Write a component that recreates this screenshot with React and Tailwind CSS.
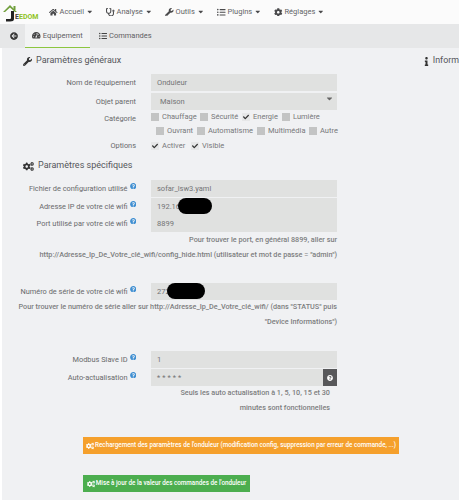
import React from 'react';
import {
  FaHome, FaStethoscope, FaWrench, FaListUl, FaCog, FaCogs, FaCaretDown,
  FaTachometerAlt, FaArrowCircleLeft, FaInfo, FaQuestionCircle, FaCheck,
} from 'react-icons/fa';

const NavItem = ({ icon: Icon, label, className }) => (
  <div className={`flex items-center text-[7.5px] text-[#636466] ${className}`}>
    <Icon className="text-[8.5px] text-[#4a4a4c] mr-[2px]" />
    <span>{label}</span>
    <FaCaretDown className="text-[7.5px] text-[#4a4a4c] ml-[2px]" />
  </div>
);

const Help = () => (
  <FaQuestionCircle className="text-[6.5px] text-[#3f8fd2] ml-[2px] mb-[5px] shrink-0" />
);

const Field = ({ label, help, value, className = '', children }) => (
  <div className={`flex items-center ${className}`}>
    <div className="w-[136px] flex justify-end items-center text-[7.4px] text-[#68696b] whitespace-nowrap">
      {label}
      {help && <Help />}
    </div>
    <div className="relative ml-[15px] w-[186px] h-[17px] bg-[#e0e1e0] flex items-center pl-[6px] text-[7.5px] text-[#737476]">
      {value}
      {children}
    </div>
  </div>
);

const Check = ({ label, checked, className = '' }) => (
  <div className={`flex items-center text-[7.5px] text-[#77787a] ${className}`}>
    <span className={`w-[8px] h-[8px] mr-[3px] flex items-center justify-center ${checked ? 'bg-[#e6e7e8]' : 'bg-[#c3c4c4]'}`}>
      {checked && <FaCheck className="text-[6px] text-[#333]" />}
    </span>
    {label}
  </div>
);

const Note = ({ children, className = '' }) => (
  <div className={`text-right text-[7.25px] font-medium text-[#7d7e80] whitespace-nowrap h-[14.5px] leading-[14.5px] ${className}`}>
    {children}
  </div>
);

const Blob = ({ className }) => (
  <span className={`absolute bg-black rounded-full ${className}`} />
);

const Logo = () => (
  <div className="flex items-end w-[46px] h-[20px] shrink-0">
    <svg width="15" height="18" viewBox="0 0 15 18" className="shrink-0">
      <path d="M0 8 L7 1 L14 8 L12 8 L7 3.5 L2 8 Z" fill="#6f9e3a" />
      <rect x="10.5" y="2" width="2" height="4" fill="#6f9e3a" />
      <path d="M8 7 H11 V15 Q11 17.5 7 17.5 H3 V15 H7 Q8 15 8 14 Z" fill="#222" />
    </svg>
    <span className="-ml-[3px] text-[7px] font-bold text-[#8fc31f] leading-[9px]">
      <span className="text-[#444]">E</span>EDOM
    </span>
  </div>
);

export default function App() {
  return (
    <div className="w-[459px] h-[500px] overflow-hidden bg-[#f0f1f3] flex flex-col font-['Roboto',sans-serif]">
      <div className="h-[24px] bg-[#fbfbfb] flex items-center pl-[3px] shrink-0">
        <Logo />
        <NavItem icon={FaHome} label="Accueil" className="w-[57px]" />
        <NavItem icon={FaStethoscope} label="Analyse" className="w-[59px]" />
        <NavItem icon={FaWrench} label="Outils" className="w-[52px]" />
        <NavItem icon={FaListUl} label="Plugins" className="w-[57px]" />
        <NavItem icon={FaCog} label="Réglages" />
      </div>

      <div className="h-[24px] bg-[#e6e7e8] flex items-stretch pl-[2px] shrink-0">
        <div className="w-[23px] flex items-center justify-center">
          <FaArrowCircleLeft className="text-[8px] text-[#333]" />
        </div>
        <div className="w-[65px] bg-[#f2f3f4] border-b-[1px] border-[#8cc63f] flex items-center justify-center text-[7.5px] text-[#5f6063]">
          <FaTachometerAlt className="text-[8.5px] text-[#444] mr-[2px]" />
          Equipement
        </div>
        <div className="flex items-center ml-[9px] text-[7.5px] text-[#5f6063]">
          <FaListUl className="text-[8px] text-[#444] mr-[2px]" />
          Commandes
        </div>
      </div>

      <div className="flex-1 border-l-2 border-white">
        <div className="flex pt-[5px] pl-[21px] h-[26px]">
          <div className="flex items-center w-[401px] text-[9px] text-[#55565a] h-[16px]">
            <FaWrench className="text-[9px] text-[#333] mr-[4px]" />
            Paramètres généraux
          </div>
          <div className="flex items-center text-[8.9px] text-[#55565a] h-[16px] whitespace-nowrap">
            <FaInfo className="text-[9px] text-[#333] mr-[2px] shrink-0" />
            Inform
          </div>
        </div>

        <div className="-ml-[2px]">
          <Field label="Nom de l'équipement" value="Onduleur" />
          <Field label="Objet parent" value={<span className="pl-[3px]">Maison</span>} className="mt-[2px]">
            <FaCaretDown className="absolute right-[3px] top-[1px] text-[9px] text-[#666]" />
          </Field>

          <div className="flex">
            <div className="w-[136px] text-right text-[7.4px] text-[#68696b] pt-[3px]">Catégorie</div>
            <div className="ml-[15px] w-[188px]">
              <div className="flex h-[14px]">
                <Check label="Chauffage" className="w-[49px]" />
                <Check label="Sécurité" className="w-[42px]" />
                <Check label="Energie" className="w-[40px]" checked />
                <Check label="Lumière" />
              </div>
              <div className="flex h-[14px] pl-[5px]">
                <Check label="Ouvrant" className="w-[41px]" />
                <Check label="Automatisme" className="w-[60px]" />
                <Check label="Multimédia" className="w-[52px]" />
                <Check label="Autre" />
              </div>
            </div>
          </div>

          <div className="flex items-center h-[14px] mt-[1px]">
            <div className="w-[136px] text-right text-[7.4px] text-[#68696b]">Options</div>
            <div className="ml-[15px] flex">
              <Check label="Activer" className="w-[40px]" checked />
              <Check label="Visible" checked />
            </div>
          </div>

          <div className="flex items-center text-[9px] text-[#55565a] h-[16px] mt-[5px] ml-[23px]">
            <FaCogs className="text-[11px] text-[#333] mr-[4px]" />
            Paramètres spécifiques
          </div>

          <Field label="Fichier de configuration utilisé" help value="sofar_lsw3.yaml" className="mt-[6px]" />
          <Field label="Adresse IP de votre clé wifi" help value="192.16" className="mt-[1px]">
            <Blob className="left-[27px] top-[0px] w-[34px] h-[16px]" />
          </Field>
          <Field label="Port utilisé par votre clé wifi" help value="8899" />

          <div className="w-[337px] mt-[1px]">
            <Note>Pour trouver le port, en général 8899, aller sur</Note>
            <Note>http://Adresse_Ip_De_Votre_clé_wifi/config_hide.html (utilisateur et mot de passe = "admin")</Note>
          </div>

          <Field label="Numéro de série de votre clé wifi" help value="272" className="mt-[21px]">
            <Blob className="left-[16px] top-[0px] w-[38px] h-[16px]" />
          </Field>

          <div className="w-[337px]">
            <Note>Pour trouver le numéro de série aller sur http://Adresse_Ip_De_Votre_clé_wifi/ (dans "STATUS" puis</Note>
            <Note>"Device Informations")</Note>
          </div>

          <Field label="Modbus Slave ID" help value="1" className="mt-[22px]" />
          <Field label="Auto-actualisation" help value={<span className="tracking-[2px]">*****</span>} className="mt-[1px]">
            <div className="absolute right-0 top-0 w-[14px] h-[17px] bg-[#58585a] flex items-center justify-center">
              <FaQuestionCircle className="text-[6px] text-white" />
            </div>
          </Field>

          <div className="w-[330px]">
            <Note>Seuls les auto actualisation à 1, 5, 10, 15 et 30</Note>
            <Note>minutes sont fonctionnelles</Note>
          </div>

          <div className="ml-[83px] mt-[22px] w-[316px] h-[17px] bg-[#f5a02c] flex items-center justify-center text-[6.3px] font-medium text-white whitespace-nowrap">
            <FaCogs className="text-[8px] mr-[1px]" />
            Rechargement des paramètres de l'onduleur (modification config, suppression par erreur de commande, ...)
          </div>
          <div className="ml-[83px] mt-[21px] w-[167px] h-[17px] bg-[#4cae4f] flex items-center justify-center text-[6.3px] font-medium text-white whitespace-nowrap">
            <FaCogs className="text-[8px] mr-[1px]" />
            Mise à jour de la valeur des commandes de l'onduleur
          </div>
        </div>
      </div>
    </div>
  );
}
